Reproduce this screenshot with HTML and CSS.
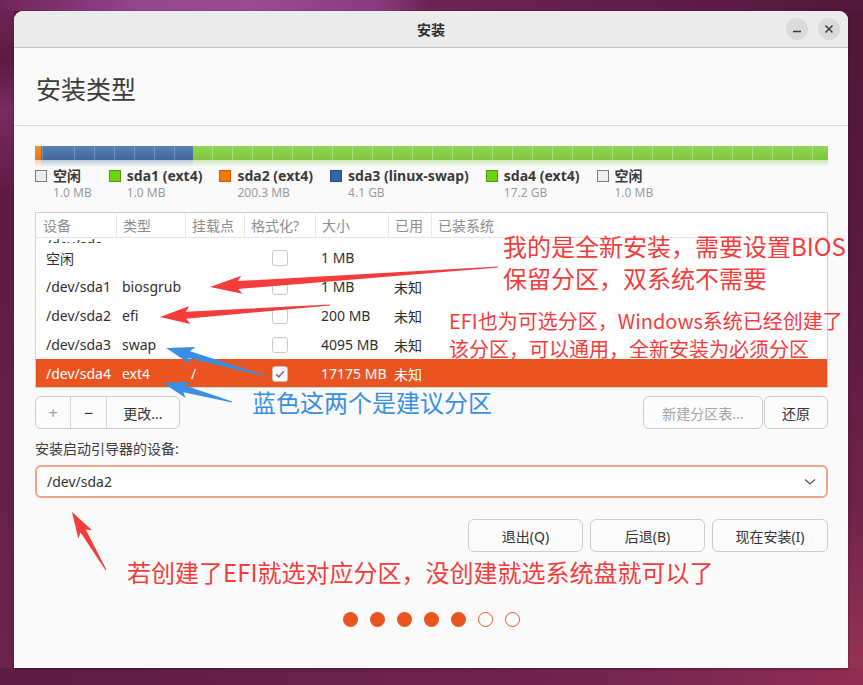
FILE: index.html
```html
<!DOCTYPE html>
<html lang="zh-CN">
<head>
<meta charset="utf-8">
<title>安装</title>
<link rel="stylesheet" href="styles.css">
</head>
<body>
<div class="window">
  <div class="titlebar">
    <span class="title">安装</span>
    <div class="wm-buttons">
      <span class="wm-btn"><svg width="10" height="10" viewBox="0 0 10 10"><path d="M1 7.5H9" stroke="#333" stroke-width="1.4"/></svg></span>
      <span class="wm-btn"><svg width="10" height="10" viewBox="0 0 10 10"><path d="M1.5 1.5L8.5 8.5M8.5 1.5L1.5 8.5" stroke="#333" stroke-width="1.4"/></svg></span>
    </div>
  </div>
  <div class="content">
    <h1 class="heading">安装类型</h1>
    <div class="main">
      <div class="diskbar">
        <div class="seg seg-orange" style="width:6px"><div class="bar"></div><div class="refl"></div></div>
        <div class="seg seg-blue" style="width:152px"><div class="bar"></div><div class="refl"></div></div>
        <div class="seg seg-green" style="flex:1"><div class="bar"></div><div class="refl"></div></div>
      </div>
      <div class="legend">
        <div class="litem"><span class="sw sw-free"></span><div><div class="lname">空闲</div><div class="lsize">1.0 MB</div></div></div>
        <div class="litem"><span class="sw sw-green"></span><div><div class="lname">sda1 (ext4)</div><div class="lsize">1.0 MB</div></div></div>
        <div class="litem"><span class="sw sw-orange"></span><div><div class="lname">sda2 (ext4)</div><div class="lsize">200.3 MB</div></div></div>
        <div class="litem"><span class="sw sw-blue"></span><div><div class="lname">sda3 (linux-swap)</div><div class="lsize">4.1 GB</div></div></div>
        <div class="litem"><span class="sw sw-green"></span><div><div class="lname">sda4 (ext4)</div><div class="lsize">17.2 GB</div></div></div>
        <div class="litem"><span class="sw sw-free"></span><div><div class="lname">空闲</div><div class="lsize">1.0 MB</div></div></div>
      </div>

      <div class="ptable">
        <div class="prow phead">
          <div>设备</div><div>类型</div><div>挂载点</div><div>格式化?</div><div>大小</div><div>已用</div><div>已装系统</div>
        </div>
        <div class="pbody">
          <div class="prow partial"><div><span class="ptext">/dev/sda</span></div></div>
          <div class="prow"><div>空闲</div><div></div><div></div><div class="cbcell"><span class="cb"></span></div><div>1 MB</div><div></div><div></div></div>
          <div class="prow"><div>/dev/sda1</div><div>biosgrub</div><div></div><div class="cbcell"><span class="cb"></span></div><div>1 MB</div><div>未知</div><div></div></div>
          <div class="prow"><div>/dev/sda2</div><div>efi</div><div></div><div class="cbcell"><span class="cb"></span></div><div>200 MB</div><div>未知</div><div></div></div>
          <div class="prow"><div>/dev/sda3</div><div>swap</div><div></div><div class="cbcell"><span class="cb"></span></div><div>4095 MB</div><div>未知</div><div></div></div>
          <div class="prow selected"><div>/dev/sda4</div><div>ext4</div><div>/</div><div class="cbcell"><span class="cb checked"><svg width="12" height="12" viewBox="0 0 12 12"><path d="M2.2 6.3L4.8 8.8L9.8 3.2" fill="none" stroke="#777" stroke-width="1.6"/></svg></span></div><div>17175 MB</div><div>未知</div><div></div></div>
        </div>
      </div>

      <div class="toolbar">
        <div class="seggroup">
          <span class="sbtn sbtn-plus disabled">+</span>
          <span class="sbtn sbtn-minus">−</span>
          <span class="sbtn sbtn-change">更改...</span>
        </div>
        <div class="rbtns">
          <span class="btn btn-newtable disabled">新建分区表...</span>
          <span class="btn btn-revert">还原</span>
        </div>
      </div>

      <div class="bootlabel">安装启动引导器的设备:</div>
      <div class="combo">
        <span>/dev/sda2</span>
        <svg width="12" height="8" viewBox="0 0 12 8"><path d="M1 1.5L6 6L11 1.5" fill="none" stroke="#555" stroke-width="1.3"/></svg>
      </div>

      <div class="actions">
        <span class="btn abtn">退出(Q)</span>
        <span class="btn abtn">后退(B)</span>
        <span class="btn abtn">现在安装(I)</span>
      </div>

      <div class="dots">
        <span class="dot"></span><span class="dot"></span><span class="dot"></span><span class="dot"></span><span class="dot"></span><span class="dot empty"></span><span class="dot empty"></span>
      </div>
    </div>
  </div>
</div>

<div class="annot">
  <svg class="arrows" width="863" height="685" viewBox="0 0 863 685">
    <polygon class="red" points="497.97,266.5 237.6,281.07 241.3,275.8 210,287 242.5,293.76 238.2,289.05 498.03,267.5"/>
    <polygon class="red" points="330,304.5 185.71,311.81 189.34,306.06 160,317 190.52,324.02 186.17,318.79 330,305.5"/>
    <polygon class="blue" points="265.14,375.52 190.04,351.16 195.39,346.96 166,348 190.49,364.28 188.14,357.9 264.86,376.48"/>
    <polygon class="blue" points="232.13,401.52 185.13,385.46 190.31,381.7 163,383 185.81,398.08 183.27,392.2 231.87,402.48"/>
    <polygon class="red" points="106.43,569.75 85.74,529.44 92.08,530.35 72,512 78.28,538.47 80.56,532.48 105.57,570.25"/>
  </svg>
  <div class="note n1">我的是全新安装，需要设置BIOS<br>保留分区，双系统不需要</div>
  <div class="note n2">EFI也为可选分区，Windows系统已经创建了<br>该分区，可以通用，全新安装为必须分区</div>
  <div class="note n3">蓝色这两个是建议分区</div>
  <div class="note n4">若创建了EFI就选对应分区，没创建就选系统盘就可以了</div>
</div>
</body>
</html>
```

FILE: styles.css
```css
* { box-sizing: border-box; }

html, body {
  margin: 0;
  padding: 0;
}

body {
  position: relative;
  width: 863px;
  height: 685px;
  overflow: hidden;
  padding: 11px 15px 0 14px;
  font-family: "Noto Sans", "Noto Sans CJK SC", sans-serif;
  color: #3c3c3c;
  background:
    linear-gradient(90deg, #6e2556 0px, #7f3170 60px, #94468a 140px, #9a4c8e 250px, #8a3a7c 380px, #6a2252 430px, #5e1c45 700px, #52173a 863px) top left / 100% 11px no-repeat,
    linear-gradient(90deg, #5e1c44 0px, #66204a 300px, #732450 600px, #922d52 863px) bottom left / 100% 17px no-repeat,
    linear-gradient(180deg, #6e2556 0px, #5c1a42 60px, #7a2a60 110px, #5e1a42 200px, #63204a 420px, #6a224a 685px) top left / 14px 100% no-repeat,
    linear-gradient(180deg, #4e1636 0px, #5c1a42 300px, #6e2248 500px, #9a3454 685px) top right / 15px 100% no-repeat,
    #5c1a42;
}

/* ---------- window ---------- */
.window {
  width: 834px;
  height: 657px;
  background: #fafafa;
  border-radius: 9px 9px 0 0;
  overflow: hidden;
  display: flex;
  flex-direction: column;
  box-shadow: 0 1px 3px rgba(0, 0, 0, 0.35);
}

.titlebar {
  flex: none;
  height: 37px;
  background: #ebebeb;
  border-bottom: 1px solid #c4c4c4;
  display: grid;
  grid-template-columns: 1fr auto 1fr;
  align-items: center;
  padding: 0 8px;
}

.title {
  grid-column: 2;
  font-family: "Noto Sans CJK SC", sans-serif;
  font-weight: bold;
  font-size: 14px;
  color: #2e2e2e;
}

.wm-buttons {
  grid-column: 3;
  justify-self: end;
  display: flex;
  gap: 10px;
}

.wm-btn {
  width: 22px;
  height: 22px;
  border-radius: 50%;
  background: #dadada;
  display: flex;
  align-items: center;
  justify-content: center;
}

.content {
  flex: 1;
  display: flex;
  flex-direction: column;
}

.heading {
  margin: 0;
  font-family: "Noto Sans CJK SC", sans-serif;
  font-weight: normal;
  font-size: 25px;
  line-height: 32px;
  color: #3b3b3b;
  padding: 24px 22px 21px;
  border-bottom: 1px solid #dcdcdc;
}

.main {
  padding: 20px 20px 0 21px;
  display: flex;
  flex-direction: column;
}

/* ---------- disk bar ---------- */
.diskbar {
  display: flex;
  height: 21px;
}

.seg {
  display: flex;
  flex-direction: column;
}

.bar {
  height: 14px;
}

.refl {
  height: 7px;
}

.seg-orange .bar {
  background: linear-gradient(180deg, #f7902a, #e7761a);
}
.seg-orange .refl {
  background: linear-gradient(180deg, rgba(240, 130, 40, 0.35), rgba(240, 130, 40, 0));
}

.seg-blue .bar {
  background:
    repeating-linear-gradient(90deg, transparent 0px, transparent 19px, rgba(140, 170, 210, 0.55) 19px, rgba(140, 170, 210, 0.55) 20px) 14px 0 / 100% 100%,
    linear-gradient(180deg, #5a80b4, #40679c);
}
.seg-blue .refl {
  background: linear-gradient(180deg, rgba(70, 105, 155, 0.35), rgba(70, 105, 155, 0));
}

.seg-green .bar {
  background:
    repeating-linear-gradient(90deg, transparent 0px, transparent 19px, rgba(190, 235, 150, 0.6) 19px, rgba(190, 235, 150, 0.6) 20px) 0 0 / 100% 100%,
    linear-gradient(180deg, #93d652, #7cc53a);
}
.seg-green .refl {
  background: linear-gradient(180deg, rgba(125, 195, 60, 0.35), rgba(125, 195, 60, 0));
}

/* ---------- legend ---------- */
.legend {
  display: flex;
  gap: 17px;
  height: 34px;
}

.litem {
  display: flex;
  gap: 6px;
}

.sw {
  flex: none;
  width: 12px;
  height: 12px;
  margin-top: 3px;
  border: 1px solid #777;
}
.sw-free { background: #eeeeee; border-color: #7a7a7a; }
.sw-green { background: #73d216; border-color: #4e9a06; }
.sw-orange { background: #f57900; border-color: #ce5c00; }
.sw-blue { background: #3465a4; border-color: #204a87; }

.lname {
  font-weight: bold;
  font-size: 14px;
  line-height: 18px;
  color: #3a3a3a;
  white-space: nowrap;
}

.lsize {
  font-size: 12px;
  line-height: 16px;
  color: #9a9a9a;
  white-space: nowrap;
}

/* ---------- partition table ---------- */
.ptable {
  margin-top: 11px;
  height: 176px;
  border: 1px solid #cfcfcf;
  background: #ffffff;
  display: flex;
  flex-direction: column;
}

.prow {
  display: grid;
  grid-template-columns: 81px 69px 59px 71px 73px 43px 1fr;
  align-items: center;
  height: 29px;
  font-size: 14px;
  color: #2f2f2f;
  white-space: nowrap;
}

.prow > div {
  padding-left: 5px;
}

.prow > div:first-child {
  padding-left: 10px;
}

.phead {
  flex: none;
  height: 25px;
  border-bottom: 1px solid #e4e4e4;
  color: #8d8d8d;
  align-items: stretch;
}

.phead > div {
  display: flex;
  align-items: center;
  padding-left: 6px;
  border-right: 1px solid #e8e8e8;
}

.phead > div:first-child {
  padding-left: 7px;
}

.phead > div:last-child {
  border-right: none;
}

.pbody {
  flex: 1;
  overflow: hidden;
}

.partial {
  height: 5px;
  overflow: hidden;
  align-items: end;
}

.ptext {
  display: block;
  line-height: 14px;
  margin-bottom: 0;
}

.prow .cbcell {
  padding-left: 0;
  display: flex;
  justify-content: center;
  padding-right: 1px;
}

.cb {
  width: 16px;
  height: 16px;
  border: 1px solid #cacaca;
  border-radius: 3px;
  background: #ffffff;
  display: flex;
  align-items: center;
  justify-content: center;
}

.cb.checked {
  background: #f7f7f7;
  border-color: #c0c0c0;
}

.selected {
  background: #e95420;
  color: #ffffff;
}

/* ---------- toolbar ---------- */
.toolbar {
  margin-top: 8px;
  display: flex;
  justify-content: space-between;
  height: 33px;
}

.seggroup {
  display: flex;
  border: 1px solid #cdcdcd;
  border-radius: 6px;
  background: #fcfcfc;
  overflow: hidden;
}

.sbtn {
  display: flex;
  align-items: center;
  justify-content: center;
  font-size: 14px;
  color: #333;
}

.sbtn + .sbtn {
  border-left: 1px solid #d6d6d6;
}

.sbtn-plus { width: 34px; font-size: 17px; }
.sbtn-minus { width: 36px; font-size: 16px; }
.sbtn-change { width: 73px; }

.disabled {
  color: #a4a4a4;
}

.rbtns {
  display: flex;
  gap: 1px;
}

.btn {
  display: flex;
  align-items: center;
  justify-content: center;
  height: 33px;
  border: 1px solid #cdcdcd;
  border-radius: 6px;
  background: #fcfcfc;
  font-size: 14px;
  color: #333;
  white-space: nowrap;
}

.btn.disabled {
  color: #a4a4a4;
}

.btn-newtable { width: 120px; }
.btn-revert { width: 64px; }

/* ---------- boot loader ---------- */
.bootlabel {
  margin-top: 10px;
  font-size: 14px;
  line-height: 20px;
  color: #3c3c3c;
}

.combo {
  margin-top: 6px;
  height: 33px;
  border: 2px solid #f0a386;
  border-radius: 6px;
  background: #ffffff;
  display: flex;
  align-items: center;
  justify-content: space-between;
  padding: 0 10px 0 10px;
  font-size: 14px;
  color: #333;
}

/* ---------- actions ---------- */
.actions {
  margin-top: 21px;
  display: flex;
  justify-content: flex-end;
  gap: 7px;
}

.abtn {
  width: 115px;
}

.abtn:last-child {
  width: 116px;
}

/* ---------- progress dots ---------- */
.dots {
  margin-top: 60px;
  display: flex;
  justify-content: center;
  gap: 12px;
}

.dot {
  width: 15px;
  height: 15px;
  border-radius: 50%;
  background: #e95420;
}

.dot.empty {
  background: #ffffff;
  border: 1.5px solid #e95420;
}

/* ---------- annotations overlay ---------- */
.annot {
  position: absolute;
  left: 0;
  top: 0;
  width: 863px;
  height: 685px;
  pointer-events: none;
}

.arrows {
  position: absolute;
  left: 0;
  top: 0;
}

.arrows .red { fill: #f43c3c; }
.arrows .blue { fill: #3b8fe3; }

.note {
  position: absolute;
  white-space: nowrap;
  font-family: "Noto Sans CJK SC", sans-serif;
  color: #f43c3c;
}

.n1 {
  left: 503px;
  top: 230px;
  font-size: 24px;
  line-height: 32px;
}

.n2 {
  left: 449px;
  top: 307px;
  font-size: 20px;
  line-height: 28px;
}

.n3 {
  left: 252px;
  top: 386px;
  font-size: 24px;
  line-height: 32px;
  color: #3b8fe3;
}

.n4 {
  left: 127px;
  top: 556px;
  font-size: 24px;
  line-height: 32px;
}
```
